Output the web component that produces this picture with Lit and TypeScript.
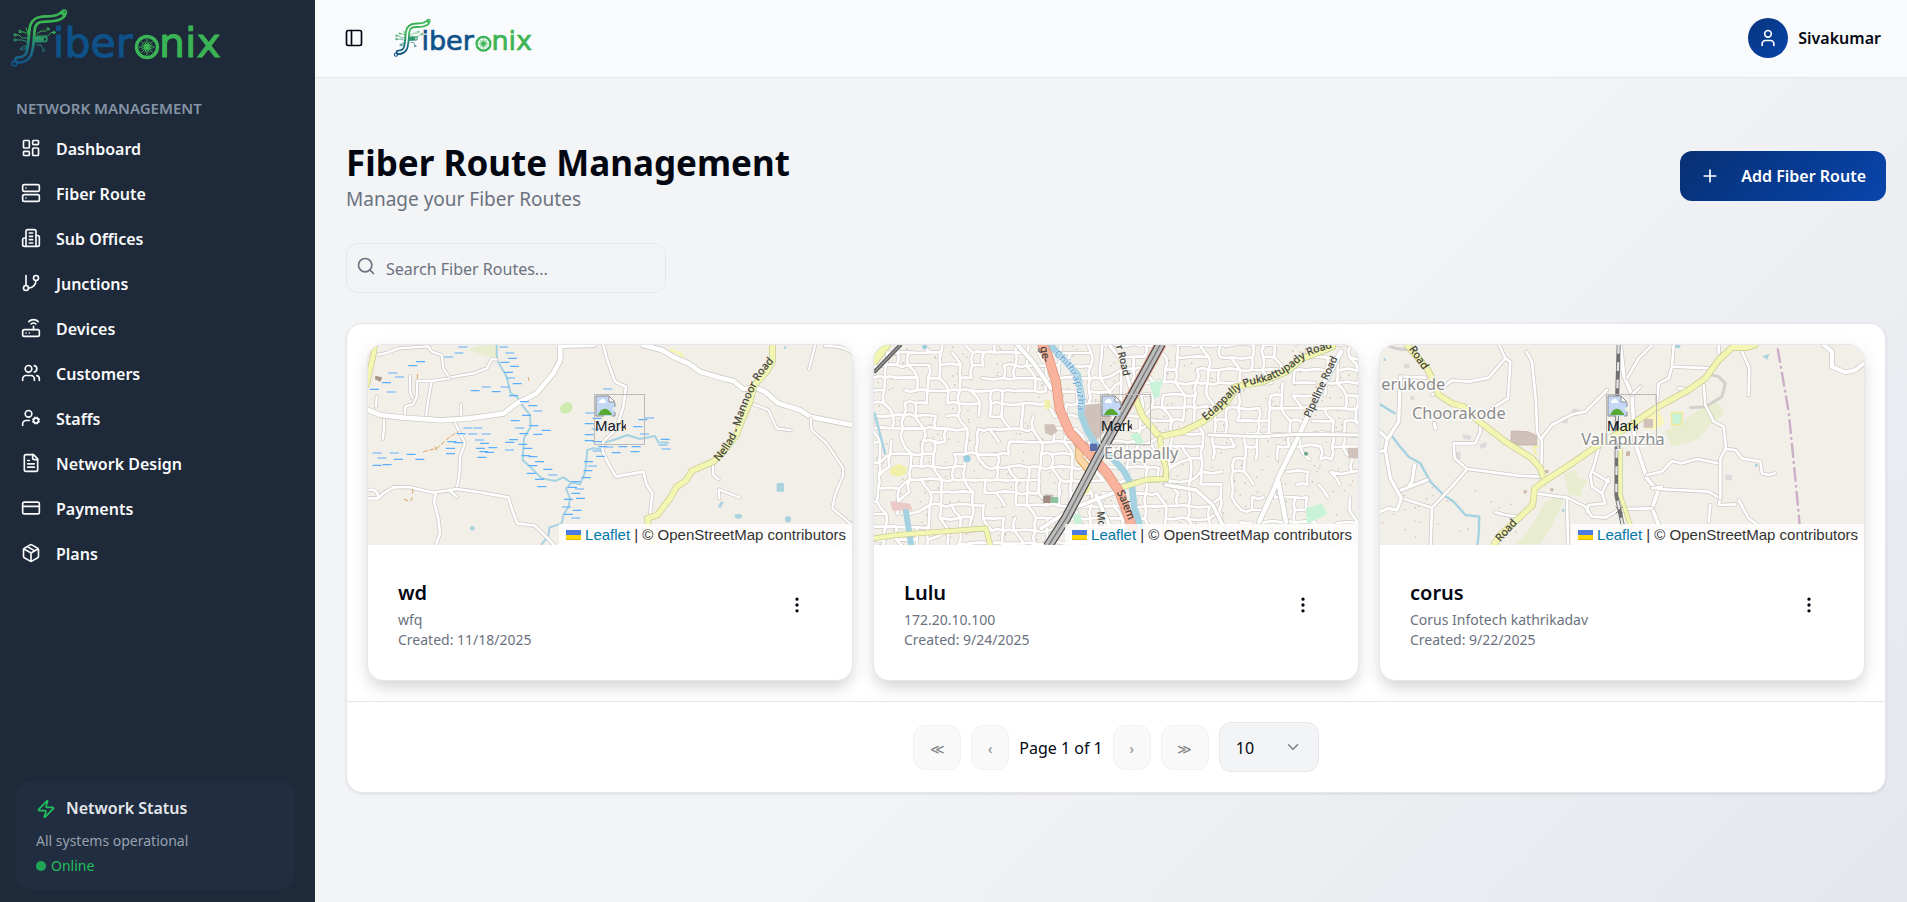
import { LitElement, html, svg, css, nothing } from "lit";
import { customElement, property } from "lit/decorators.js";

/* ---------- icons ---------- */
const ICONS: Record<string, any> = {
  dashboard: svg`<rect width="7" height="9" x="3" y="3" rx="1"/><rect width="7" height="5" x="14" y="3" rx="1"/><rect width="7" height="9" x="14" y="12" rx="1"/><rect width="7" height="5" x="3" y="16" rx="1"/>`,
  server: svg`<rect width="20" height="8" x="2" y="2" rx="2"/><rect width="20" height="8" x="2" y="14" rx="2"/><path d="M6 6h.01M6 18h.01"/>`,
  building: svg`<path d="M6 22V4a2 2 0 0 1 2-2h8a2 2 0 0 1 2 2v18Z"/><path d="M6 12H4a2 2 0 0 0-2 2v6a2 2 0 0 0 2 2h2M18 9h2a2 2 0 0 1 2 2v9a2 2 0 0 1-2 2h-2M10 6h4M10 10h4M10 14h4M10 18h4"/>`,
  branch: svg`<path d="M6 3v12"/><circle cx="18" cy="6" r="3"/><circle cx="6" cy="18" r="3"/><path d="M18 9a9 9 0 0 1-9 9"/>`,
  router: svg`<rect width="20" height="8" x="2" y="14" rx="2"/><path d="M6.01 18H6M10.01 18H10M15 10v4M17.84 7.17a4 4 0 0 0-5.66 0M20.66 4.34a8 8 0 0 0-11.31 0"/>`,
  users: svg`<path d="M16 21v-2a4 4 0 0 0-4-4H6a4 4 0 0 0-4 4v2"/><circle cx="9" cy="7" r="4"/><path d="M22 21v-2a4 4 0 0 0-3-3.87M16 3.13a4 4 0 0 1 0 7.75"/>`,
  usercog: svg`<circle cx="9" cy="7" r="4"/><path d="M10 15H6a4 4 0 0 0-4 4v2"/><circle cx="18" cy="15" r="3"/><path d="m21.7 16.4-.9-.3M15.2 13.9l-.9-.3M16.6 18.7l.3-.9M19.1 12.2l.3-.9M19.6 18.7l-.4-1M16.8 12.3l-.4-1M14.3 16.6l1-.4M20.7 13.8l1-.4"/>`,
  file: svg`<path d="M15 2H6a2 2 0 0 0-2 2v16a2 2 0 0 0 2 2h12a2 2 0 0 0 2-2V7Z"/><path d="M14 2v4a2 2 0 0 0 2 2h4M10 9H8M16 13H8M16 17H8"/>`,
  card: svg`<rect width="20" height="14" x="2" y="5" rx="2"/><path d="M2 10h20"/>`,
  box: svg`<path d="M11 21.73a2 2 0 0 0 2 0l7-4A2 2 0 0 0 21 16V8a2 2 0 0 0-1-1.73l-7-4a2 2 0 0 0-2 0l-7 4A2 2 0 0 0 3 8v8a2 2 0 0 0 1 1.73zM12 22V12M3.29 7 12 12l8.71-5M7.5 4.27l9 5.15"/>`,
  zap: svg`<path d="M4 14a1 1 0 0 1-.78-1.63l9.9-10.2a.5.5 0 0 1 .86.46l-1.92 6.02A1 1 0 0 0 13 10h7a1 1 0 0 1 .78 1.63l-9.9 10.2a.5.5 0 0 1-.86-.46l1.92-6.02A1 1 0 0 0 11 14z"/>`,
  panel: svg`<rect width="18" height="18" x="3" y="3" rx="2"/><path d="M9 3v18"/>`,
  user: svg`<path d="M19 21v-2a4 4 0 0 0-4-4H9a4 4 0 0 0-4 4v2"/><circle cx="12" cy="7" r="4"/>`,
  plus: svg`<path d="M5 12h14M12 5v14"/>`,
  search: svg`<circle cx="11" cy="11" r="8"/><path d="m21 21-4.3-4.3"/>`,
  dots: svg`<circle cx="12" cy="12" r="1"/><circle cx="12" cy="5" r="1"/><circle cx="12" cy="19" r="1"/>`,
  chevron: svg`<path d="m6 9 6 6 6-6"/>`,
};
const icon = (name: string, size = 20) => html`<svg class="icon" aria-hidden="true" width=${size} height=${size} viewBox="0 0 24 24" fill="none" stroke="currentColor" stroke-width="2" stroke-linecap="round" stroke-linejoin="round">${ICONS[name]}</svg>`;

/* ---------- map drawing helpers ---------- */
const road = (d: string, w = 9, fill = "#fff", edge = "#c9c5c1") => svg`<path d=${d} stroke=${edge} stroke-width=${w + 4}/><path d=${d} stroke=${fill} stroke-width=${w}/>`;
const yellow = (d: string, w = 14) => road(d, w, "#f3f6b3", "#c3c88c");
const water = (d: string, w = 6) => svg`<path d=${d} stroke="#a5d2e1" stroke-width=${w}/>`;

const seeded = (seed: number) => () => (seed = (seed * 16807) % 2147483647) / 2147483647;

function marsh(points: number[][]) {
  return svg`<path stroke="#5eaefc" stroke-width="3.4" stroke-linecap="butt" d=${points.map(([x, y, w = 27]) => `M${x} ${y}h${w}`).join("")} />`;
}

function mapWd() {
  return svg`
    <path fill="#e9edcf" d="M325 46Q350 30 385 30L410 30 412 66 385 65Z"/>
    <ellipse cx="619" cy="219" rx="20" ry="16" fill="#cdebb0" transform="rotate(-30 619 219)"/>
    <g fill="#aad3df"><rect x="1250" y="444" width="22" height="26" rx="3"/><ellipse cx="1135" cy="544" rx="11" ry="7"/><ellipse cx="1284" cy="553" rx="9" ry="10"/><path d="m1073 517 10-18 9 2-11 18z"/><circle cx="337" cy="580" r="7"/><circle cx="1275" cy="38" r="4"/></g>
    <path fill="#a89588" d="m46 122 20 5-4 13-17-7z"/>
    <g fill="none" stroke-linecap="round" stroke-linejoin="round">
      ${water("M410 30 411 75 440 125 452 175 470 185 490 215 510 240 512 275 492 310 488 375 510 395 545 430 585 438 610 427 632 442 660 448 676 410 682 345 700 340 725 343")}
      ${water("M727 325 770 312 802 300 840 312 885 303 895 322 925 323")}
      ${water("M632 446 618 460 630 490 626 515 610 540 605 565 568 578 566 600 545 628")}
      ${water("M1476 560 1455 585 1435 628", 4)}
      ${road("M30 60 60 58 85 52 115 40 205 34 215 50 245 60 250 100 268 128 340 115 380 100 395 72 410 74", 7)}
      ${road("M268 130 215 138 172 138 170 185 160 208 136 214 135 240M215 138 203 205 198 245M150 122 150 170 158 190M303 208 302 248M50 185 48 215", 7)}
      ${road("M72 250 72 285 68 312M285 262 298 290 315 325 300 365 298 420 290 462", 7)}
      ${road("M24 490 55 490 70 475 100 457 145 456 220 473 290 462 360 472 445 487 460 535 472 565 525 572 558 605 582 630M228 473 222 500 235 550 240 595 228 628M24 465Q50 460 55 485M268 465 290 485", 8)}
      ${road("M24 225 60 240 130 248 245 256 330 250 430 236 470 205 530 175 580 115 601 75 601 32 700 30", 14)}
      ${road("M730 30 740 70 765 140 798 155 790 215 770 280 730 320 728 350 745 385 768 425 850 410 860 450 877 475 870 540", 8)}
      <path d="M930 46Q950 48 968 62" stroke="#f3f6b3" stroke-width="9"/>
      ${road("M848 30 905 45 945 68 985 85 1020 110 1080 128 1120 138 1150 162 1185 158 1215 170 1255 205 1320 225 1350 245 1400 255 1476 270", 14)}
      ${road("M1365 32 1347 102M1395 34Q1450 30 1476 55M1180 208 1225 225 1250 280 1292 286M1352 250 1355 285 1400 325 1450 400 1448 425 1425 480 1417 520 1476 570M1058 378 1060 420 1076 433M1078 490 1076 463 1140 488", 7)}
      ${yellow("M45 30 40 60 20 150")}
      ${yellow("M1237 30 1237 80 1220 110 1183 150 1170 200 1140 270 1130 300 1090 350 1060 380 995 408 980 435 950 455 930 490 892 540 862 550 868 590 890 640", 16)}
      ${marsh([[295,36],[283,54],[253,66],[168,80],[145,92],[85,114],[105,126],[66,143],[30,163],[80,171],[418,36],[436,54],[444,70],[421,82],[450,94],[432,112],[438,129],[458,146],[422,156],[365,156],[332,167],[395,170],[447,182],[480,200],[505,212],[520,228],[486,241],[452,257],[465,279],[508,272],[545,286],[520,298],[478,296],[447,314],[475,328],[435,345],[436,322],[490,340],[484,362],[505,365],[525,380],[505,392],[550,403],[500,415],[565,420],[525,433],[532,455],[310,279],[340,279],[325,297],[365,297],[345,315],[360,325],[385,338],[348,340],[358,350],[375,352],[352,367],[262,320],[282,323],[258,340],[258,356],[290,296],[38,354],[90,354],[140,358],[52,369],[102,373],[166,373],[68,389],[38,391],[676,234],[698,250],[674,266],[695,282],[674,299],[698,320],[674,317],[715,335],[733,336],[775,335],[815,335],[708,364],[698,348],[755,353],[812,350],[672,380],[684,393],[670,407],[665,428],[634,440],[624,457],[645,462],[634,475],[612,493],[648,490],[606,516],[638,526],[612,538],[634,549],[730,162],[820,275],[840,297],[835,254],[855,249],[902,313],[895,330],[905,342]])}
      <path stroke="#d9a35c" stroke-width="3" stroke-dasharray="12 8" d="M190 350 230 340 270 305 295 290M230 345 222 330M133 493l10 4M158 462v14M157 488l-4 8M172 118v12M505 128l2 8"/>
    </g>
    <path id="nellad" d="M1076 380Q1108 345 1136 290 1150 230 1182 165 1200 125 1236 85L1250 55" fill="none"/>
    <text class="road" font-size="32"><textPath href="#nellad">Nellad - Mannoor Road</textPath></text>
    <path fill="#f4f3ef" d="M1450 590q10-25 26-22v62h-20z"/>`;
}

/* Irregular block pattern for a dense town: jittered lanes with random gaps. */
function lanes() {
  const r = seeded(4711);
  let d = "";
  const at = (i: number, j: number) => {
    const k = seeded(i * 7919 + j * 104729 + 400031);
    k(); k();
    return [i * 44 + (k() - 0.5) * 30 + j * 4, j * 39 + (k() - 0.5) * 28 - i * 1.2 + 20];
  };
  for (let i = -3; i < 37; i++)
    for (let j = -1; j < 19; j++) {
      const [x, y] = at(i, j);
      const east = x > 980 && y > 340;
      const keep = east ? 0.4 : 0.74;
      if (r() < keep) { const [a, b] = at(i + 1, j); d += `M${x | 0} ${y | 0}L${((x + a) / 2) | 0} ${((y + b) / 2 + (r() - 0.5) * 12) | 0} ${a | 0} ${b | 0}`; }
      if (r() < keep) { const [a, b] = at(i, j + 1); d += `M${x | 0} ${y | 0}L${((x + a) / 2 + (r() - 0.5) * 12) | 0} ${((y + b) / 2) | 0} ${a | 0} ${b | 0}`; }
    }
  return d;
}
function specks(seed: number, n: number, x0: number, y0: number, w: number, h: number) {
  const r = seeded(seed);
  let d = "";
  for (let i = 0; i < n; i++) d += `M${(x0 + r() * w) | 0} ${(y0 + r() * h) | 0}h4v4h-4z`;
  return svg`<path d=${d} fill="#cdbfb5"/>`;
}

function mapLulu() {
  return svg`
    ${specks(99, 420, 24, 30, 1452, 600)}
    <g fill="none" stroke-linecap="round" stroke-linejoin="round">${road(lanes(), 8, "#fff", "#cfcac5")}</g>
    <path fill="#d0c2ba" d="M652 210 700 205 740 240 715 290 690 318 672 290 655 250ZM535 268h30l10 20-18 14-20-8ZM1445 338h31v32h-28zM565 480l-20 25-18-10 12-18zM615 310l50 10 10 35-45-10z"/>
    <path fill="#f1f0a8" d="m72 400 25-14 26 12-4 20-22 8-25-8zM535 195h18v26h-16zM655 440l20-10-5 40-20 15z"/>
    <path fill="#c8f3d8" d="m850 142 42-6-12 30 4 16-20 10zM792 300l25-8 18 30-20 8zM1318 520l50-14 16 30-60 32zM620 540l20-6 10 30-24 6z"/>
    <path fill="#ecc9c9" d="m72 498 60 8 8 18-20 4-20-2-20 2z"/>
    <g fill="none" stroke-linecap="round" stroke-linejoin="round">
      ${water("M552 30 590 70 635 120 648 190 645 240 665 290 690 330 740 370 775 410 798 455 805 520 822 570", 20)}
      ${water("M120 530 135 628", 18)}
      ${water("M26 235 57 355", 7)}
      ${road("M455 30 500 80 555 160", 13)}
      ${road("M730 30 770 80 800 180", 10)}
      ${road("M1425 50 1350 190 1290 320 1240 420 1225 460 1180 560M1235 430 1260 560", 14)}
      ${road("M525 580 620 520 700 490 765 465M900 450 990 465 1040 510 1070 570M690 480 730 570", 11)}
      ${road("M1030 300 1180 305 1300 298 1476 300", 9)}
      <path d="M640 340 640 370 665 400" stroke="#d9a35c" stroke-width="24"/><path d="M640 340 640 370 665 400" stroke="#fcd6a4" stroke-width="19"/>
      ${yellow("M808 190 830 245 880 305 950 290 1010 260 1080 205 1110 155 1190 140 1260 110 1310 70 1400 35", 17)}
      ${yellow("M882 310 888 360 900 400 900 432 840 434 765 458")}
      ${yellow("M24 610 90 600 360 580 372 628", 13)}
      ${yellow("M24 78 65 25", 22)}
      <path d="M525 20 545 60 570 140 580 220 610 290 660 345 720 410 760 470 800 580" stroke="#dd8d73" stroke-width="29"/>
      <path d="M525 20 545 60 570 140 580 220 610 290 660 345 720 410 760 470 800 580" stroke="#f9b29c" stroke-width="25"/>
      <g stroke-linecap="butt"><path d="M24 112 105 28" stroke="#666" stroke-width="12"/><path d="M24 112 105 28" stroke="#ddd" stroke-width="2"/>
      <path d="M885 25 800 180 760 250" stroke="#f3a592" stroke-width="35"/>
      <path d="M885 25 800 180 700 360 600 550 545 635" stroke="#4a4644" stroke-width="30"/>
      <path d="M885 25 800 180 700 360 600 550 545 635" stroke="#bdbdbd" stroke-width="23"/>
      <path d="M885 25 800 180 700 360 600 550 545 635" stroke="#777" stroke-width="4"/></g>
    </g>
    <rect x="672" y="326" width="22" height="22" fill="#5b6cae"/>
    <circle cx="303" cy="371" r="11" fill="#9bcfe0"/><circle cx="176" cy="36" r="7" fill="#9bcfe0"/><circle cx="1320" cy="356" r="6" fill="#6aa886"/><rect x="555" y="486" width="22" height="18" fill="#8ec5a0"/><rect x="532" y="482" width="22" height="22" fill="#a08c82"/>
    <path id="epr" d="M1020 258Q1065 220 1100 180 1130 150 1190 142 1250 125 1300 80 1340 48 1440 30" fill="none"/>
    <path id="ppl" d="M1332 250 1435 25" fill="none"/>
    <path id="chit" d="M562 62Q610 90 628 150 640 190 632 260" fill="none"/>
    <path id="sal" d="M752 472Q772 510 795 580" fill="none"/>
    <path id="rrd" d="M750 34Q765 85 775 140" fill="none"/>
    <text class="road" font-size="32"><textPath href="#epr">Edappally Pukkattupady Road</textPath></text>
    <text class="road" font-size="31"><textPath href="#ppl">Pipeline Road</textPath></text>
    <text class="road" font-size="30"><textPath href="#rrd">r Road</textPath></text>
    <text class="road" font-size="32"><textPath href="#sal">Salem</textPath></text>
    <text class="river" font-size="30"><textPath href="#chit">Chithrapuzha</textPath></text>
    <text class="road" font-size="32" transform="translate(523 36) rotate(80)">ge-</text>
    <text class="road" font-size="30" transform="translate(694 530) rotate(85)">Mo</text>
    <text class="place" font-size="49" x="714" y="371">Edappally</text>`;
}

function mapCorus() {
  return svg`
    <g fill="#e9edcf"><path d="m880 290 110-70 40-20 22 18 4 22-30 18-20 20-26 34-80 24z"/><path d="m575 415 35-10 8 25 30 5-20 30 0 22-38-8z"/><path d="m520 500 25-12 28 6-10 30-30 58-30 46h-70l50-60z"/></g>
    <path fill="#d0c2ba" stroke="#c0ab9f" stroke-width="2" d="m418 288 50 2 26 12v28h-78z"/>
    <path fill="#f9f5b8" d="m818 250 44-22 16 36-30 20-30-4z"/><path fill="#d0c2ba" d="M815 252h28v26h-28z"/>
    <path fill="#c8f3d8" stroke="#efe9a0" stroke-width="5" d="M898 233h34l-4 34-28 4z"/><path fill="none" stroke="#f3ef8a" stroke-width="4" d="M500 335h-13v20h10"/>
    <g fill="#dcdadb"><path d="M600 222h20v22h-20zM572 250h15v15h-15zM273 298l26 4-5 14-22-6zM322 328l22-6-2 14-16 6zM248 350h18v22h-18zM1060 420h20v16h-20zM96 86h16v14H96zM115 183h12v12h-12z"/></g>
    ${specks(5, 26, 30, 450, 420, 170)}
    <path fill="#c9b5a8" d="M762 350l12-2v14l-12 2zM455 466h9v9h-9zM520 405h9v9h-9zM535 460h9v9h-9z"/>
    <path fill="#aad3df" d="m1170 64 22-8-6 18zM905 30h20v9h-18zM1149 387h8v8h-8zM570 522h7v8h-7zM35 70h6v8h-6z"/>
    <g fill="none" stroke-linecap="round" stroke-linejoin="round">
      ${water("M24 208 68 235M62 306 80 330 110 365 145 385 175 440 215 480 245 500 280 540 322 545 320 600 316 628", 7)}
      <path d="M50 32Q80 48 120 42M955 218 1000 215 1050 185 1060 145 1040 125 1020 120" stroke="#d3d1cf" stroke-width="9"/>
      ${road("M382 30 400 70 350 128 290 140 240 136 180 180M400 70 415 80 408 190 370 215 325 245 325 290 310 325 245 325 248 370 285 402 440 422 500 425M285 402 240 455 180 518 90 490M180 518 176 628M90 125 160 128", 8)}
      ${road("M463 50 480 80 492 200 495 290 510 320 508 400M508 310 540 270 600 238 640 230 690 180 705 165", 8)}
      ${road("M85 125 80 260 45 315 40 345 24 350M24 290 45 310M40 345 55 430 88 490 75 525 50 520 24 530M88 465 165 435M128 390 120 440 110 455M190 280 187 265", 10)}
      ${road("M490 475 585 488 588 628M590 490 640 515 660 545 700 548 740 525M680 340 665 395 655 420 660 455 690 475 710 430M660 410 710 440M690 475 700 505 650 510 645 530", 8)}
      ${road("M745 30 755 120 780 180 788 320 825 430 858 470 840 520 860 570", 11)}
      ${road("M840 30 800 70 765 130M905 30 900 95 890 130 860 145 855 200M900 95 1020 100M780 180 805 155M825 420 870 410 900 378 930 385 975 372 1040 385M745 522 840 520M858 462 1010 470 1045 490 1040 510 1090 508M870 455 840 460M1100 495 1130 550 1170 580M1015 510 1010 560", 8)}
      ${road("M995 150 1000 210 1025 260 1055 275 1062 340 1045 370 1045 490M1062 342 1090 345 1110 370 1165 380 1170 415 1190 420 1208 415M1108 45 1132 100 1130 180M370 532 400 540 435 545M920 160 950 162M1040 55 1040 30", 8)}
      ${road("M1355 30 1380 50 1380 95 1420 112 1450 105 1476 85", 12)}
      <g stroke-linecap="butt"><path d="M740 30 735 200 733 480 752 570" stroke="#707070" stroke-width="12"/><path d="M740 30 735 200 733 480 752 570" stroke="#e4e4e4" stroke-width="7" stroke-dasharray="26 26"/></g>
      ${yellow("M105 30 165 100 180 130 200 180 240 205 275 215 310 250 400 320 480 370 505 400 518 438", 16)}
      ${yellow("M745 340 745 480 775 570", 10)}
      ${yellow("M1150 30 1120 38 1080 38 1040 75 1000 130 950 165 850 220 770 275 680 330 600 385 518 438 488 460 482 510 440 550 385 600 365 630", 16)}
      <path d="M1217 40 1250 230 1270 430 1283 570" stroke="#c9aec6" stroke-width="7" stroke-dasharray="44 10 8 10" stroke-linecap="butt"/>
      <path d="m732 516 20 18M752 516l-20 18" stroke="#777" stroke-width="3"/>
    </g>
    <path id="rd1" d="M110 42 165 122" fill="none"/><path id="rd2" d="M385 622 445 554" fill="none"/>
    <text class="road" font-size="32"><textPath href="#rd1">Road</textPath></text>
    <text class="road" font-size="32"><textPath href="#rd2">Road</textPath></text>
    <text class="place" font-size="49" x="28" y="164">erukode</text>
    <text class="place" font-size="49" x="120" y="253">Choorakode</text>
    <text class="place" font-size="49" x="628" y="330">Vallapuzha</text>`;
}

const ROUTES = [
  { name: "wd", place: "wfq", created: "11/18/2025", map: mapWd },
  { name: "Lulu", place: "172.20.10.100", created: "9/24/2025", map: mapLulu },
  { name: "corus", place: "Corus Infotech kathrikadav", created: "9/22/2025", map: mapCorus },
];

const NAV = [
  ["dashboard", "Dashboard"], ["server", "Fiber Route"], ["building", "Sub Offices"], ["branch", "Junctions"], ["router", "Devices"],
  ["users", "Customers"], ["usercog", "Staffs"], ["file", "Network Design"], ["card", "Payments"], ["box", "Plans"],
];

const base = css`
  *, *::before, *::after { box-sizing: border-box; }
  :host { font-family: "Noto Sans", "Open Sans", sans-serif; color: #030712; }
  h1, h2, p, ul { margin: 0; padding: 0; }
  button, input, select { font: inherit; color: inherit; }
  a { color: inherit; text-decoration: none; }
  svg { display: block; flex: none; }
`;

@customElement("fiberonix-logo")
class FiberonixLogo extends LitElement {
  static styles = [base, css`
    :host { display: block; }
    svg { width: 100%; height: auto; overflow: visible; }
    .core { stroke: var(--logo-bg); }
    text { font-family: "DejaVu Sans", sans-serif; font-size: 41px; stroke-width: 1; }
    .blue { fill: #0f5289; stroke: #0f5289; }
    .green { fill: #3bb455; stroke: #3bb455; }
  `];
  render() {
    const rays = Array.from({ length: 16 }, (_, i) => {
      const a = (i * Math.PI) / 8, l = i % 2 ? 6 : 8;
      return `M147 47L${(147 + Math.cos(a) * l).toFixed(1)} ${(47 + Math.sin(a) * l).toFixed(1)}`;
    }).join("");
    const stem = "M18 60C30 60 30 50 31 42L32 30C33 21 38 19 46 19C56 19 60 17 62 15";
    return html`<svg viewBox="10 8 212 62" role="img" aria-label="Fiberonix">
      <defs><linearGradient id="g" gradientUnits="userSpaceOnUse" x1="0" y1="64" x2="0" y2="22"><stop offset="0" stop-color="#0f5289"/><stop offset=".3" stop-color="#1d6d84"/><stop offset=".8" stop-color="#3bb455"/></linearGradient></defs>
      <g fill="none" stroke="url(#g)" stroke-linecap="round">
        <path d=${stem} stroke-width="8"/><path d="M33 39.500H41" stroke-width="6"/>
        <path class="core" d=${stem} stroke-width="2.500"/>
        <circle cx="14.500" cy="63.500" r="2.400" stroke-width="1.600"/><circle cx="64" cy="12.500" r="2.400" stroke-width="1.600"/><circle cx="44.500" cy="39.200" r="2.400" stroke-width="1.600"/>
        <path stroke-width="1" d="M28 38 22 38 19 35H16M28 42 22 40H16M28 34 24 32H21M28 46 24 46 22 48M37 34 41 31H46M37 36H48L51 32.500H54M37 45 41 45 43 49M26 28 28 33M24 50 28 44"/>
        <g stroke-width="1"><circle cx="15" cy="35" r="1.200"/><circle cx="15" cy="40" r="1.200"/><circle cx="20" cy="31.500" r="1.200"/><circle cx="21.500" cy="49" r="1.200"/><circle cx="48" cy="29" r="1.200"/><circle cx="54" cy="32.500" r="1.200"/><circle cx="43.500" cy="50.500" r="1.200"/></g>
      </g>
      <text class="blue" x="53" y="57">iber</text>
      <circle cx="147" cy="47" r="10.500" fill="none" stroke="#3bb455" stroke-width="3.400"/>
      <path d=${rays} stroke="#3bb455" stroke-width="1"/><circle cx="147" cy="47" r="3" fill="#3bb455"/>
      <text class="green" x="159" y="57">nix</text>
    </svg>`;
  }
}

@customElement("app-sidebar")
class AppSidebar extends LitElement {
  static styles = [base, css`
    :host { display: flex; flex-direction: column; width: 315px; flex: none; background: #1e2939; color: #f9fafb; --logo-bg: #1e2939; }
    fiberonix-logo { width: 212px; margin: 8px 0 0 10px; }
    .heading { margin-top: 26px; padding: 0 16px; font-size: 15px; font-weight: 600; line-height: 24px; color: #8594a5; }
    ul { list-style: none; margin-top: 6px; }
    .link { display: flex; align-items: center; gap: 15px; height: 45px; padding: 0 21px; font-size: 16px; font-weight: 600; }
    .link .icon { margin-bottom: 2px; }
    .status { margin: auto 20px 12px 16px; padding: 15px 20px 12px; border-radius: 16px; background: #212d40; font-size: 14px; line-height: 25px; color: #99a1af; }
    .title { display: flex; align-items: center; gap: 10px; margin-bottom: 7px; font-size: 16px; font-weight: 600; color: #e5e7eb; }
    .title .icon, .online { color: #21c05c; }
    .online { display: flex; align-items: center; gap: 5px; }
    .online::before { content: ""; width: 10px; height: 10px; border-radius: 50%; background: #21a556; }
  `];
  render() {
    return html`
      <fiberonix-logo></fiberonix-logo>
      <h2 class="heading">NETWORK MANAGEMENT</h2>
      <nav><ul>${NAV.map(([i, t]) => html`<li><a class="link" href="#">${icon(i)}<span>${t}</span></a></li>`)}</ul></nav>
      <section class="status">
        <div class="title">${icon("zap")}Network Status</div>
        <p>All systems operational</p>
        <p class="online">Online</p>
      </section>`;
  }
}

@customElement("route-card")
class RouteCard extends LitElement {
  @property({ attribute: false }) route!: (typeof ROUTES)[number];
  static styles = [base, css`
    :host { display: block; overflow: hidden; border: 1px solid #e5e7eb; border-radius: 16px; background: #fff; box-shadow: 0 10px 15px -3px #0000001a, 0 4px 20px -2px #0000001a; }
    .map { position: relative; height: 200px; background: #f2efe9; overflow: hidden; font: 15px "Liberation Sans", Arial, sans-serif; }
    .tiles { width: 100%; height: 100%; }
    .tiles text { font-family: "Noto Sans", sans-serif; paint-order: stroke; stroke-linejoin: round; }
    .road { fill: #3d3d35; stroke: #3d3d35; stroke-width: 0.6px; }
    .river { fill: #5b9bd0; stroke: #ffffffa0; stroke-width: 4px; }
    .place { fill: #8a8a8a; stroke: #ffffffd8; stroke-width: 9px; }
    .marker { position: absolute; top: 49px; left: calc(50% - 16px); width: 51px; height: 51px; border: 1px solid #b9b9b9; }
    .marker span { display: block; width: 31px; overflow: hidden; line-height: 17px; color: #111827; }
    .attribution { position: absolute; right: 0; bottom: 0; display: flex; align-items: center; gap: 4px; padding: 0 6px 0 7px; line-height: 21px; background: #ffffffcc; color: #333; }
    .attribution a { color: #0078a8; }
    .body { display: flex; align-items: flex-start; justify-content: space-between; padding: 30px; }
    h2 { font-size: 20px; line-height: 35px; font-weight: 600; }
    p { font-size: 14px; line-height: 20px; color: #6b7280; }
    .more { display: grid; place-items: center; width: 50px; height: 60px; padding: 0; border: 0; border-radius: 12px; background: none; }
  `];
  render() {
    const r = this.route;
    if (!r) return nothing;
    return html`
      <div class="map">
        <svg class="tiles" viewBox="24 30 1452 600" preserveAspectRatio="xMidYMid slice" aria-hidden="true">${r.map()}</svg>
        <div class="marker">
          <svg width="22" height="22" viewBox="0 0 22 22" aria-hidden="true">
            <path d="M1 1h13l6 6v5l-3 2 3 2v5H1z" fill="#c4d7f5"/>
            <path d="M3 20q6-12 14-1v1z" fill="#57a933"/>
            <path d="M4 7q0-2 2-2 1-2 3-1 1 0 1 2 1 0 1 2H4z" fill="#fff"/>
            <path d="M1 21V1h13M20 8v4M20 17v4h-3M1 21h8" fill="none" stroke="#8d8d8d"/>
            <path d="M14 1v6h6z" fill="#fff" stroke="#8d8d8d"/>
          </svg>
          <span>Mark</span>
        </div>
        <div class="attribution">
          <svg width="15" height="10" viewBox="0 0 15 10" aria-hidden="true"><path fill="#4c7be1" d="M0 0h15v5H0z"/><path fill="#ffd500" d="M0 5h15v4H0z"/><path fill="#e0bc00" d="M0 9h15v1H0z"/></svg>
          <span><a href="#">Leaflet</a> | © OpenStreetMap contributors</span>
        </div>
      </div>
      <div class="body">
        <div><h2>${r.name}</h2><p>${r.place}</p><p>Created: ${r.created}</p></div>
        <button class="more" type="button" aria-label="Actions for ${r.name}">${icon("dots")}</button>
      </div>`;
  }
}

@customElement("app-root")
class AppRoot extends LitElement {
  static styles = [base, css`
    :host { display: flex; min-height: 100vh; font-size: 16px; }
    .page { flex: 1; min-width: 0; display: flex; flex-direction: column; background: linear-gradient(135deg, #f3f4f6 0%, #f3f4f6 50%, #e5e7ee 100%); }
    header { display: flex; align-items: center; height: 78px; padding: 0 26px 1px 29px; border-bottom: 1px solid #e5e7eb; background: #f9fafc; --logo-bg: #f9fafc; }
    header fiberonix-logo { width: 140px; margin-left: 29px; }
    .plain { display: flex; align-items: center; padding: 0; border: 0; background: none; }
    .account { gap: 10px; margin-left: auto; font-weight: 600; }
    .avatar { display: grid; place-items: center; width: 40px; height: 40px; border-radius: 50%; color: #fff; background: linear-gradient(135deg, #07347c, #0845ad); }
    main { display: flex; flex-direction: column; gap: 30px; padding: 61px 21px 30px 31px; }
    .top { display: flex; align-items: center; justify-content: space-between; }
    h1 { font-size: 35px; line-height: 48px; font-weight: 700; }
    .top p { padding-bottom: 2px; font-size: 19px; line-height: 24px; color: #6b7280; }
    .add { display: flex; align-items: center; gap: 21px; height: 50px; padding: 0 20px; border: 0; border-radius: 12px; font-weight: 600; color: #fff; background: linear-gradient(135deg, #073073, #0845ad); }
    .search { display: flex; align-items: center; gap: 10px; width: 320px; height: 50px; padding: 0 9px; border: 1px solid #e5e7eb; border-radius: 12px; color: #6b7280; }
    .search .icon { margin-bottom: 4px; }
    .search input { flex: 1; min-width: 0; padding: 2px 0 0; border: 0; outline: 0; background: none; }
    .search input::placeholder { color: #6b7280; opacity: 1; }
    .panel { border: 1px solid #e5e7eb; border-radius: 16px; background: #fff; box-shadow: 0 1px 3px #0000001a; }
    .cards { display: grid; grid-template-columns: repeat(3, minmax(0, 1fr)); gap: 20px; padding: 20px; }
    .pager { display: flex; align-items: center; justify-content: center; gap: 10px; padding: 20px; border-top: 1px solid #e5e7eb; }
    .pager > span { padding-top: 2px; }
    .step { width: 38px; height: 45px; padding: 2px 0 0; border: 1px solid #f1f2f4; border-radius: 12px; background: #f9f9f9; color: #83858a; font-size: 14px; }
    .wide { width: 48px; }
    .size { position: relative; width: 100px; }
    .size select { appearance: none; width: 100%; height: 50px; padding: 2px 16px 0; border: 1px solid #e5e7eb; border-radius: 12px; background: #f3f4f6; }
    .size .icon { position: absolute; right: 17px; top: 16px; color: #7b7f87; pointer-events: none; }
  `];
  render() {
    return html`
      <app-sidebar></app-sidebar>
      <div class="page">
        <header>
          <button class="plain" type="button" aria-label="Toggle sidebar">${icon("panel")}</button>
          <fiberonix-logo></fiberonix-logo>
          <button class="plain account" type="button"><span class="avatar">${icon("user")}</span>Sivakumar</button>
        </header>
        <main>
          <div class="top">
            <div><h1>Fiber Route Management</h1><p>Manage your Fiber Routes</p></div>
            <button class="add" type="button">${icon("plus")}Add Fiber Route</button>
          </div>
          <label class="search">${icon("search")}<input type="search" aria-label="Search Fiber Routes" placeholder="Search Fiber Routes..." /></label>
          <section class="panel">
            <div class="cards">${ROUTES.map((r) => html`<route-card .route=${r}></route-card>`)}</div>
            <div class="pager">
              <button class="step wide" type="button" disabled aria-label="First page">≪</button>
              <button class="step" type="button" disabled aria-label="Previous page">‹</button>
              <span>Page 1 of 1</span>
              <button class="step" type="button" disabled aria-label="Next page">›</button>
              <button class="step wide" type="button" disabled aria-label="Last page">≫</button>
              <div class="size"><select aria-label="Rows per page"><option>10</option><option>20</option><option>50</option></select>${icon("chevron", 18)}</div>
            </div>
          </section>
        </main>
      </div>`;
  }
}
